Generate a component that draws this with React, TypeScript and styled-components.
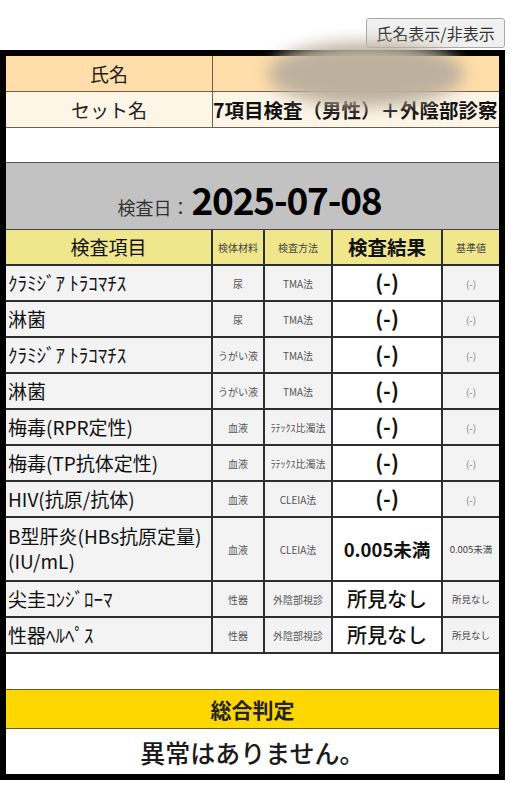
import React from 'react';
import styled, { createGlobalStyle } from 'styled-components';

const GlobalStyle = createGlobalStyle`
  html, body { margin: 0; padding: 0; background: #fff; }
  body { font-family: "Noto Sans CJK JP", "Noto Sans", sans-serif; color: #111; }
  * { box-sizing: border-box; }
`;

const Page = styled.div`
  width: 510px;
  padding-top: 18px;
`;

const Toolbar = styled.div`
  display: flex;
  justify-content: flex-end;
  padding-right: 5px;
  margin-bottom: 2px;
`;

const ToggleButton = styled.button`
  height: 30px;
  width: 139px;
  padding: 0;
  font-family: "Noto Sans CJK JP", sans-serif;
  font-size: 16px;
  color: #333;
  background: #f0f0f0;
  border: 1px solid #a8a8a8;
  border-radius: 3px;
`;

const Sheet = styled.div`
  position: relative;
  width: 505px;
  border: 6px solid #000;
`;

const Redaction = styled.div`
  position: absolute;
  left: 262px;
  top: -14px;
  width: 196px;
  height: 64px;
  border-radius: 50%;
  background: #bdb19e;
  filter: blur(8px);
  pointer-events: none;
`;

const InfoRow = styled.div<{ $bg: string; $h: number }>`
  display: grid;
  grid-template-columns: 207px 1fr;
  height: ${(p) => p.$h}px;
  background: ${(p) => p.$bg};
  border-bottom: 1.5px solid #6e5d4c;
`;

const InfoLabel = styled.div`
  display: flex;
  align-items: center;
  justify-content: center;
  font-size: 19px;
  color: #222;
  border-right: 1.5px solid #6e5d4c;
`;

const InfoValue = styled.div`
  display: flex;
  align-items: center;
  font-size: 19.5px;
  font-weight: 700;
  white-space: nowrap;
  overflow: hidden;
  color: #111;
`;

const BlankRow = styled.div<{ $h: number; $noLine?: boolean }>`
  height: ${(p) => p.$h}px;
  background: #fff;
  border-bottom: ${(p) => (p.$noLine ? 'none' : '1.5px solid #555')};
`;

const DateRow = styled.div`
  height: 67px;
  background: #c2c2c2;
  display: flex;
  align-items: baseline;
  justify-content: center;
  padding-top: 9px;
  padding-right: 6px;
  border-bottom: 1.5px solid #444;
`;

const DateLabel = styled.span`
  font-size: 18px;
  color: #333;
  margin-right: 2px;
`;

const DateValue = styled.span`
  font-size: 37px;
  font-weight: 700;
  color: #000;
  letter-spacing: -1.2px;
`;

const GridRow = styled.div<{ $h: number; $bg: string }>`
  display: grid;
  grid-template-columns: 207px 52px 68px 110px 1fr;
  height: ${(p) => p.$h}px;
  background: ${(p) => p.$bg};
  border-bottom: 2px solid #2e2e2e;
`;

const Cell = styled.div<{
  $size: number;
  $weight?: number;
  $color?: string;
  $bg?: string;
  $left?: boolean;
  $last?: boolean;
}>`
  display: flex;
  align-items: center;
  justify-content: ${(p) => (p.$left ? 'flex-start' : 'center')};
  text-align: ${(p) => (p.$left ? 'left' : 'center')};
  padding: ${(p) => (p.$left ? '0 2px 0 2px' : '0')};
  font-size: ${(p) => p.$size}px;
  font-weight: ${(p) => p.$weight || 400};
  color: ${(p) => p.$color || '#111'};
  background: ${(p) => p.$bg || 'transparent'};
  border-right: ${(p) => (p.$last ? 'none' : '2px solid #2e2e2e')};
  line-height: 1.3;
  white-space: nowrap;
`;

const JudgeHead = styled.div`
  height: 40px;
  background: #ffd700;
  border-top: 1.5px solid #6b5a20;
  border-bottom: 1.5px solid #6b5a20;
  display: flex;
  align-items: center;
  justify-content: center;
  font-size: 21px;
  font-weight: 700;
  color: #222;
`;

const JudgeBody = styled.div`
  height: 45px;
  background: #fff;
  display: flex;
  align-items: center;
  justify-content: center;
  font-size: 25px;
  font-weight: 500;
  color: #1a1a1a;
`;

type Item = {
  name: React.ReactNode;
  mat: string;
  method: string;
  result: string;
  ref: string;
  tall?: boolean;
};

const items: Item[] = [
  { name: 'ｸﾗﾐｼﾞｱ ﾄﾗｺﾏﾁｽ', mat: '尿', method: 'TMA法', result: '(-)', ref: '(-)' },
  { name: '淋菌', mat: '尿', method: 'TMA法', result: '(-)', ref: '(-)' },
  { name: 'ｸﾗﾐｼﾞｱ ﾄﾗｺﾏﾁｽ', mat: 'うがい液', method: 'TMA法', result: '(-)', ref: '(-)' },
  { name: '淋菌', mat: 'うがい液', method: 'TMA法', result: '(-)', ref: '(-)' },
  { name: '梅毒(RPR定性)', mat: '血液', method: 'ﾗﾃｯｸｽ比濁法', result: '(-)', ref: '(-)' },
  { name: '梅毒(TP抗体定性)', mat: '血液', method: 'ﾗﾃｯｸｽ比濁法', result: '(-)', ref: '(-)' },
  { name: 'HIV(抗原/抗体)', mat: '血液', method: 'CLEIA法', result: '(-)', ref: '(-)' },
  {
    name: (
      <span>
        B型肝炎(HBs抗原定量)
        <br />
        (IU/mL)
      </span>
    ),
    mat: '血液',
    method: 'CLEIA法',
    result: '0.005未満',
    ref: '0.005未満',
    tall: true,
  },
  { name: '尖圭ｺﾝｼﾞﾛｰﾏ', mat: '性器', method: '外陰部視診', result: '所見なし', ref: '所見なし' },
  { name: '性器ﾍﾙﾍﾟｽ', mat: '性器', method: '外陰部視診', result: '所見なし', ref: '所見なし' },
];

function resultStyle(r: string): { size: number; weight: number } {
  if (r === '(-)') return { size: 21, weight: 700 };
  if (r.startsWith('所')) return { size: 20, weight: 500 };
  return { size: 18.5, weight: 700 };
}

export default function App() {
  return (
    <Page>
      <GlobalStyle />
      <Toolbar>
        <ToggleButton>氏名表示/非表示</ToggleButton>
      </Toolbar>
      <Sheet>
        <InfoRow $bg="#ffdeaa" $h={36}>
          <InfoLabel>氏名</InfoLabel>
          <InfoValue />
        </InfoRow>
        <InfoRow $bg="#fdf5e6" $h={36}>
          <InfoLabel>セット名</InfoLabel>
          <InfoValue>7項目検査（男性）＋外陰部診察</InfoValue>
        </InfoRow>
        <BlankRow $h={35} />
        <DateRow>
          <DateLabel>検査日：</DateLabel>
          <DateValue>2025-07-08</DateValue>
        </DateRow>
        <GridRow $h={36} $bg="#f0e68c">
          <Cell $size={19}>検査項目</Cell>
          <Cell $size={10} $color="#444">検体材料</Cell>
          <Cell $size={10} $color="#444">検査方法</Cell>
          <Cell $size={19.5} $weight={700}>検査結果</Cell>
          <Cell $size={10} $color="#444" $last>基準値</Cell>
        </GridRow>
        {items.map((it, i) => {
          const rs = resultStyle(it.result);
          const dash = it.ref === '(-)';
          return (
            <GridRow key={i} $h={it.tall ? 64 : 36} $bg="#f3f3f3">
              <Cell $size={19} $left>{it.name}</Cell>
              <Cell $size={10} $color="#555">{it.mat}</Cell>
              <Cell $size={10} $color="#555">{it.method}</Cell>
              <Cell $size={rs.size} $weight={rs.weight} $bg="#fff">
                {it.result}
              </Cell>
              <Cell $size={dash ? 10 : 9.5} $color={dash ? '#888' : '#444'} $last>
                {it.ref}
              </Cell>
            </GridRow>
          );
        })}
        <BlankRow $h={35} $noLine />
        <JudgeHead>総合判定</JudgeHead>
        <JudgeBody>異常はありません。</JudgeBody>
        <Redaction />
      </Sheet>
    </Page>
  );
}
